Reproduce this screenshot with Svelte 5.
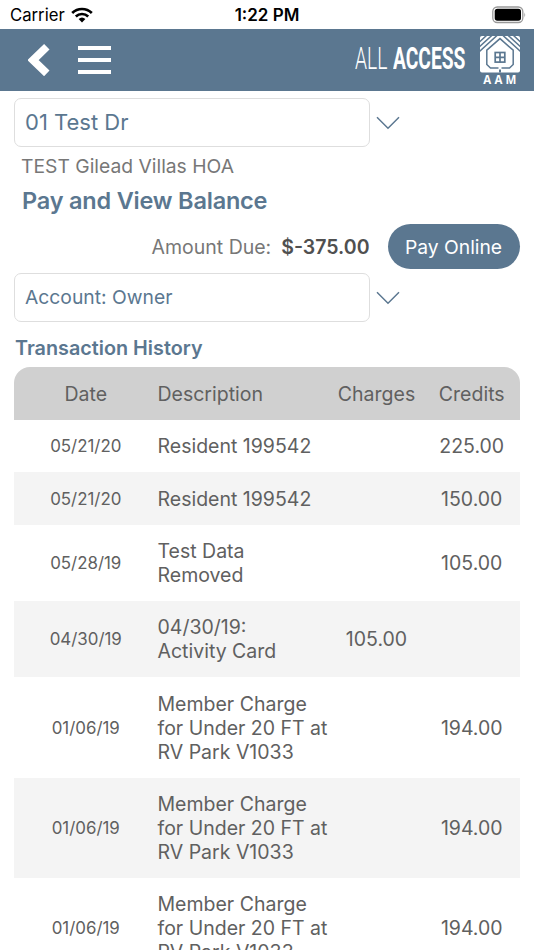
<script lang="ts">
  interface Transaction {
    date: string
    description: string
    charge?: string
    credit?: string
  }

  const transactions: Transaction[] = [
    { date: '05/21/20', description: 'Resident 199542', credit: '225.00' },
    { date: '05/21/20', description: 'Resident 199542', credit: '150.00' },
    { date: '05/28/19', description: 'Test Data\nRemoved', credit: '105.00' },
    { date: '04/30/19', description: '04/30/19:\nActivity Card', charge: '105.00' },
    { date: '01/06/19', description: 'Member Charge\nfor Under 20 FT at\nRV Park V1033', credit: '194.00' },
    { date: '01/06/19', description: 'Member Charge\nfor Under 20 FT at\nRV Park V1033', credit: '194.00' },
    { date: '01/06/19', description: 'Member Charge\nfor Under 20 FT at\nRV Park V1033', credit: '194.00' }
  ]
</script>

{#snippet chevron()}
  <svg class="chevron" width="24" height="14" viewBox="0 0 24 14" aria-hidden="true">
    <path d="M1 1.3L12 12.2L23 1.3" fill="none" stroke="#5b7790" stroke-width="1.5" />
  </svg>
{/snippet}

<div class="screen">
  <div class="status">
    <div class="carrier">
      <span>Carrier</span>
      <svg width="22" height="16" viewBox="0 0 22 16" aria-hidden="true">
        <g fill="none" stroke="#000" stroke-width="2.7">
          <path d="M1.2 6A14 14 0 0 1 20.8 6" />
          <path d="M4.8 9.5A9 9 0 0 1 17.2 9.5" />
        </g>
        <path d="M7.6 12.1A5 5 0 0 1 14.4 12.1L11 15.6Z" />
      </svg>
    </div>
    <span class="clock">1:22 PM</span>
    <svg class="battery" width="34" height="18" viewBox="0 0 34 18" aria-hidden="true">
      <rect x=".8" y="1" width="30" height="15.5" rx="4.5" fill="none" stroke="#999" stroke-width="1.3" />
      <rect x="2.7" y="2.8" width="26.3" height="11.9" rx="2.7" />
      <path d="M32.4 6.2Q34 8.8 32.4 11.4Z" fill="#999" />
    </svg>
  </div>

  <header>
    <div class="nav">
      <button aria-label="Back">
        <svg width="22" height="32" viewBox="0 0 22 32">
          <path d="M18.8 2.8L5 16.1L18.8 29.4" fill="none" stroke="#fff" stroke-width="7.8" />
        </svg>
      </button>
      <button aria-label="Menu" class="menu">
        <i></i><i></i><i></i>
      </button>
    </div>
    <div class="brand">
      <span class="word light">ALL</span>
      <span class="word bold">ACCESS</span>
      <div class="logo">
        <svg width="40" height="37" viewBox="0 0 40 37" aria-hidden="true">
          <clipPath id="frame"><rect width="40" height="36.5" rx="2" /></clipPath>
          <g clip-path="url(#frame)">
            <rect width="40" height="37" fill="#fff" />
            <g fill="none" stroke="#5b7790" stroke-width="1.5">
              <path d="M18.500 32H10.500L6.800 28.500V14.200L20 2.600L33.200 14.200V28.500L29.500 32H21.500" />
              <path d="M20 33.500V37" stroke-width="2" />
              <path d="M-1 16L17.500 -1M-1 11.200L12.300 -1M-1 6.400L7 -1M41 16L22.500 -1M41 11.200L27.700 -1M41 6.400L33 -1" />
            </g>
            <rect x="15.200" y="16.500" width="9.600" height="9.600" fill="#fff" stroke="#5b7790" stroke-width="1.700" />
            <path d="M20 16.500V26.500M15 21.300H25" stroke="#5b7790" stroke-width="1.700" />
          </g>
        </svg>
        <span>AAM</span>
      </div>
    </div>
  </header>

  <main>
    <div class="picker">
      <div class="field property">01 Test Dr</div>
      {@render chevron()}
    </div>
    <p class="community">TEST Gilead Villas HOA</p>
    <h1>Pay and View Balance</h1>
    <div class="due">
      <span class="due-label">Amount Due:</span>
      <strong>$-375.00</strong>
      <button class="pay">Pay Online</button>
    </div>
    <div class="picker">
      <div class="field account">Account: Owner</div>
      {@render chevron()}
    </div>
    <h2>Transaction History</h2>

    <div class="table">
      <div class="row head">
        <span>Date</span>
        <span>Description</span>
        <span>Charges</span>
        <span>Credits</span>
      </div>
      {#each transactions as item}
        <div class="row">
          <span class="date">{item.date}</span>
          <span class="description">{item.description}</span>
          <span class="amount">{item.charge ?? ''}</span>
          <span class="amount">{item.credit ?? ''}</span>
        </div>
      {/each}
    </div>
  </main>
</div>

<style>
  :global(body) {
    margin: 0;
    background: #fff;
  }

  .screen {
    height: 950px;
    overflow: hidden;
    display: flex;
    flex-direction: column;
    font-family: Inter, sans-serif;
    color: #606060;
  }

  .status {
    flex: none;
    height: 29px;
    box-sizing: border-box;
    padding: 0 10px;
    display: grid;
    grid-template-columns: 1fr auto 1fr;
    align-items: center;
    color: #000;
    font-size: 16.7px;
  }

  .carrier {
    display: flex;
    align-items: center;
    gap: 6px;
  }

  .clock {
    font-weight: 600;
    font-size: 17px;
  }

  .battery {
    justify-self: end;
    margin-right: -1.5px;
  }

  header {
    flex: none;
    height: 62px;
    display: flex;
    justify-content: space-between;
    align-items: center;
    background: #5b7790;
    padding: 0 14px 0 28px;
  }

  .nav {
    display: flex;
    align-items: center;
    gap: 28px;
  }

  button {
    border: 0;
    padding: 0;
    background: none;
    font-family: inherit;
  }

  svg {
    display: block;
  }

  .menu {
    display: flex;
    flex-direction: column;
    gap: 8px;
  }

  .menu i {
    width: 33px;
    height: 4px;
    background: #fff;
  }

  .brand {
    display: flex;
    align-items: center;
    color: #fff;
  }

  .word {
    font-family: Roboto, sans-serif;
    font-size: 31.5px;
    line-height: 38px;
    margin-bottom: 3px;
    transform-origin: left;
  }

  .light {
    width: 38px;
    font-weight: 300;
    transform: scaleX(0.61);
  }

  .bold {
    width: 87px;
    font-weight: 700;
    transform: scaleX(0.61);
  }

  .logo {
    display: flex;
    flex-direction: column;
    align-items: center;
    margin-top: 2px;
  }

  .logo span {
    margin: 0 -3px 0 0;
    font-family: "Open Sans", sans-serif;
    font-size: 11.5px;
    line-height: 14px;
    font-weight: 700;
    letter-spacing: 3.2px;
  }

  main {
    flex: none;
    padding: 7px 14.5px 0 14px;
  }

  .picker {
    display: flex;
    align-items: center;
    gap: 6px;
  }

  .field {
    width: 356px;
    height: 49px;
    box-sizing: border-box;
    border: 1px solid #dedede;
    border-radius: 7px;
    padding-left: 10px;
    line-height: 47px;
    color: #5b7790;
  }

  .property {
    font-size: 22px;
  }

  .account {
    font-size: 19.3px;
  }

  .community {
    margin: 7px 0 0 7px;
    font-size: 19.3px;
    line-height: 24px;
    color: #777;
  }

  h1 {
    margin: 8px 0 0 8px;
    font-size: 23.5px;
    line-height: 30px;
    font-weight: 600;
    letter-spacing: -0.2px;
    color: #5b7790;
  }

  .due {
    display: flex;
    justify-content: flex-end;
    align-items: center;
    margin: 8px 0 4px;
    font-size: 19.5px;
  }

  .due-label {
    margin-right: 10px;
    color: #777;
  }

  strong {
    margin-right: 18px;
    font-weight: 600;
    color: #505050;
  }

  .pay {
    width: 132px;
    height: 45px;
    border-radius: 23px;
    background: #5b7790;
    color: #fff;
    font-size: 19.3px;
  }

  h2 {
    margin: 13px 0 6px 1px;
    font-size: 19.8px;
    line-height: 26px;
    font-weight: 600;
    color: #5b7790;
  }

  .table {
    border-radius: 16px 16px 0 0;
    overflow: hidden;
  }

  .row {
    display: grid;
    grid-template-columns: 143.5px 171.5px 95px 95.5px;
    align-items: center;
    padding: 15.5px 0 13.2px;
    font-size: 19.5px;
    line-height: 23.85px;
    text-align: center;
  }

  .row:nth-child(odd) {
    background: #f4f4f4;
  }

  .row.head {
    background: #d0d0d0;
  }

  .row span:nth-child(2) {
    text-align: left;
    white-space: pre;
  }

  .date {
    font-size: 16.9px;
  }
</style>
